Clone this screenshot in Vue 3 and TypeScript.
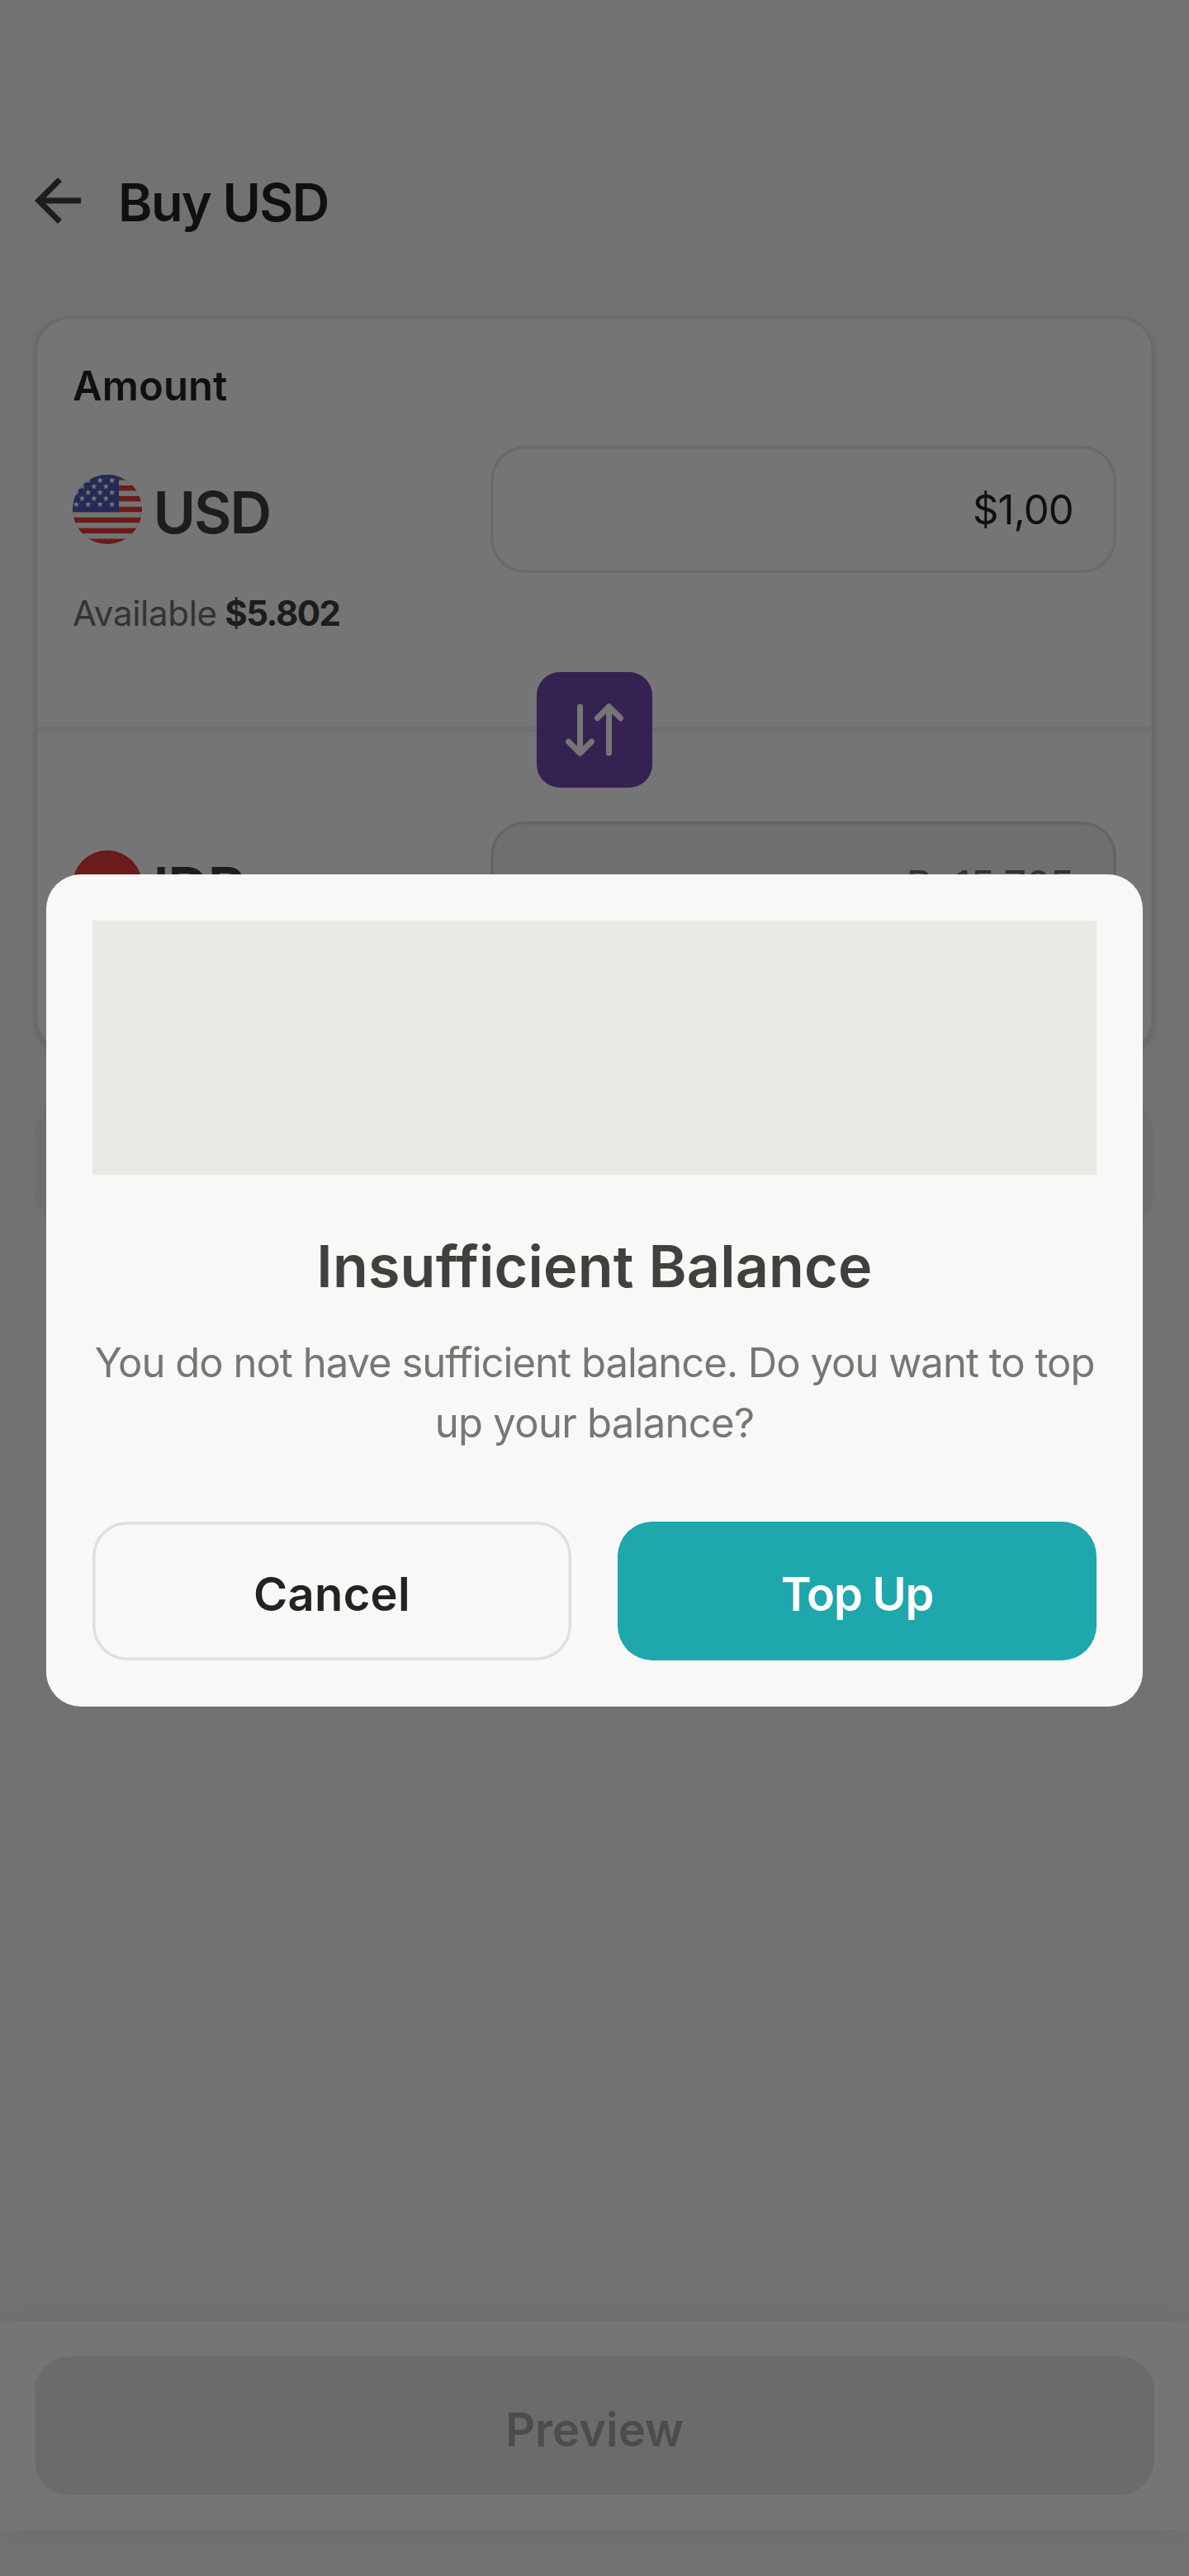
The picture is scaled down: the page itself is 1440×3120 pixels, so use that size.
<script setup lang="ts">
interface Star {
  x: number
  y: number
}

const stripes: number[] = [0, 2, 4, 6, 8, 10, 12]
const stripeHeight = 84 / 13

const stars: Star[] = []
for (let row = 0; row < 5; row++) {
  const start = row % 2 === 0 ? 4.3 : 11.4
  for (let x = start; x < 50; x += 14.45) {
    stars.push({ x, y: 7 + row * 7.25 })
  }
}

function starPoints(star: Star): string {
  const points: string[] = []
  for (let i = 0; i < 10; i++) {
    const radius = i % 2 === 0 ? 4 : 1.7
    const angle = (Math.PI / 5) * i - Math.PI / 2
    points.push(`${(star.x + radius * Math.cos(angle)).toFixed(2)},${(star.y + radius * Math.sin(angle)).toFixed(2)}`)
  }
  return points.join(' ')
}
</script>

<template>
  <div class="screen">
    <header class="header">
      <svg class="back" viewBox="0 0 24 24" aria-label="Back">
        <path d="M20 11H7.83l5.59-5.59L12 4l-8 8 8 8 1.41-1.41L7.83 13H20z" fill="#41403d" />
      </svg>
      <h1 class="title">Buy USD</h1>
    </header>

    <section class="card">
      <div class="half half-top">
        <h2 class="label">Amount</h2>
        <div class="row">
          <div class="currency">
            <svg class="flag" viewBox="0 0 84 84">
              <defs>
                <clipPath id="disc"><circle cx="42" cy="42" r="42" /></clipPath>
              </defs>
              <g clip-path="url(#disc)">
                <rect width="84" height="84" fill="#fdfdfd" />
                <rect v-for="s in stripes" :key="s" x="0" :y="s * stripeHeight" width="84" :height="stripeHeight" fill="#e93c3c" />
                <rect width="56" :height="stripeHeight * 7" fill="#4e5db9" />
                <polygon v-for="(star, i) in stars" :key="'star' + i" :points="starPoints(star)" fill="#fdfdfd" />
                <circle cx="42" cy="42" r="41" fill="none" stroke="#000" stroke-opacity="0.06" stroke-width="2" />
              </g>
            </svg>
            <span class="code">USD</span>
          </div>
          <div class="field">$1,00</div>
        </div>
        <p class="available"><span>Available</span><strong>$5.802</strong></p>
      </div>

      <div class="divider">
        <button class="swap" aria-label="Swap currencies">
          <svg viewBox="0 0 24 24" fill="none" stroke="#fff" stroke-width="2" stroke-linecap="round" stroke-linejoin="round">
            <path d="M7 4v16M3 16.05l4 4 4-4" />
            <path d="M17 20V4M13 7.95l4-4 4 4" />
          </svg>
        </button>
      </div>

      <div class="half half-bottom">
        <div class="row">
          <div class="currency">
            <svg class="flag" viewBox="0 0 84 84">
              <g clip-path="url(#disc)">
                <rect width="84" height="84" fill="#fdfdfd" />
                <rect width="84" height="42" fill="#e93c3c" />
                <circle cx="42" cy="42" r="41" fill="none" stroke="#000" stroke-opacity="0.06" stroke-width="2" />
              </g>
            </svg>
            <span class="code">IDR</span>
          </div>
          <div class="field field-disabled">Rp15.765</div>
        </div>
      </div>
    </section>

    <div class="info"></div>

    <footer class="footer">
      <button class="preview" disabled>Preview</button>
    </footer>

    <div class="overlay">
      <div class="modal" role="dialog">
        <div class="picture"></div>
        <h2 class="modal-title">Insufficient Balance</h2>
        <p class="modal-text">
          You do not have sufficient balance. Do you want to top<br /><span class="last-line">up your balance?</span>
        </p>
        <div class="actions">
          <button class="btn btn-outline">Cancel</button>
          <button class="btn btn-primary">Top Up</button>
        </div>
      </div>
    </div>
  </div>
</template>

<style>
body {
  margin: 0;
}
</style>

<style scoped>
.screen {
  position: relative;
  box-sizing: border-box;
  width: 1440px;
  height: 3120px;
  overflow: hidden;
  display: flex;
  flex-direction: column;
  padding: 201px 0 56px;
  background: #f8f8f5;
  font-family: Inter, 'Noto Sans', sans-serif;
  color: #242320;
}
h1, h2, p {
  margin: 0;
}
button {
  font-family: inherit;
  border: 0;
  padding: 0;
}
.header {
  display: flex;
  align-items: center;
  height: 84px;
  padding-left: 28px;
  gap: 31px;
}
.back {
  width: 84px;
  height: 84px;
}
.title {
  padding-top: 4px;
  font-size: 63px;
  line-height: 80px;
  font-weight: 600;
  letter-spacing: -1.62px;
}
.card {
  box-sizing: border-box;
  height: 893px;
  margin: 98px 42px 0;
  border-radius: 42px;
  background: #fefefe;
  box-shadow:
    inset 0 0 0 3.5px #e6e6e8,
    0 3.5px 3.5px rgba(90, 90, 150, 0.13),
    0 3px 14px rgba(60, 40, 40, 0.05);
}
.half {
  padding: 0 46px;
}
.half-top {
  box-sizing: border-box;
  height: 497px;
  padding-top: 48px;
}
.half-bottom {
  padding-top: 108px;
}
.label {
  font-size: 49px;
  line-height: 74px;
  font-weight: 600;
  letter-spacing: 0.1px;
}
.row {
  display: flex;
  align-items: center;
  justify-content: space-between;
  height: 154px;
}
.half-top .row {
  margin-top: 35px;
}
.currency {
  display: flex;
  align-items: center;
  gap: 13.5px;
}
.flag {
  width: 84px;
  height: 84px;
}
.code {
  padding-top: 7px;
  font-size: 70px;
  line-height: 84px;
  font-weight: 600;
  letter-spacing: -2px;
  color: #41403c;
}
.field {
  box-sizing: border-box;
  display: flex;
  align-items: center;
  justify-content: flex-end;
  width: 758px;
  height: 154px;
  padding-right: 52px;
  border-radius: 42px;
  box-shadow: inset 0 0 0 3.5px #e6e6e6;
  font-size: 49px;
  letter-spacing: -0.8px;
}
.field-disabled {
  background: #f3f1ed;
  box-shadow: inset 0 0 0 3.5px #dcdad6;
  color: #70706e;
}
.available {
  display: flex;
  gap: 9.5px;
  margin-top: 17px;
  font-size: 42px;
  line-height: 63px;
  letter-spacing: -0.3px;
  color: #70706e;
}
.available strong {
  font-weight: 700;
  letter-spacing: -1.5px;
  color: #41403c;
}
.divider {
  display: flex;
  align-items: center;
  justify-content: center;
  height: 7px;
  margin: 0 3.5px;
  background: #f1f1f1;
}
.swap {
  flex: none;
  display: flex;
  align-items: center;
  justify-content: center;
  width: 140px;
  height: 140px;
  border-radius: 28px;
  background: #714ab2;
}
.swap svg {
  width: 84px;
  height: 84px;
}
.info {
  height: 154px;
  margin: 56px 42px 0;
  border-radius: 42px;
  background: #f4f0ec;
}
.footer {
  margin-top: auto;
  padding: 42px;
  background: #fefefe;
  box-shadow: 0 0 35px rgba(30, 30, 15, 0.06);
}
.preview {
  display: block;
  width: 100%;
  height: 168px;
  padding-top: 9px;
  border-radius: 42px;
  background: #ebe9e5;
  color: #a7a7a2;
  font-size: 56px;
  font-weight: 600;
}
.overlay {
  position: absolute;
  inset: 0;
  padding: 1058.5px 56px 0;
  background: rgba(0, 0, 0, 0.54);
}
.modal {
  box-sizing: border-box;
  height: 1008px;
  padding: 56px;
  border-radius: 42px;
  background: #f9f8f6;
  text-align: center;
}
.picture {
  height: 308px;
  background: #eae9e4;
}
.modal-title {
  margin-top: 69px;
  font-size: 70px;
  line-height: 84px;
  font-weight: 600;
  letter-spacing: 0.2px;
  color: #41403d;
}
.modal-text {
  margin-top: 38px;
  font-size: 49px;
  line-height: 73.5px;
  font-weight: 400;
  letter-spacing: -0.98px;
  white-space: nowrap;
  color: #777673;
}
.last-line {
  letter-spacing: -0.7px;
}
.actions {
  display: flex;
  gap: 56px;
  margin-top: 82px;
}
.btn {
  flex: 1;
  height: 168px;
  padding-top: 8px;
  border-radius: 42px;
  font-size: 56px;
  font-weight: 600;
}
.btn-outline {
  background: transparent;
  box-shadow: inset 0 0 0 3.5px #e0dfdd;
  color: #242320;
  letter-spacing: 0.3px;
}
.btn-primary {
  background: #1ea7ad;
  color: #fff;
  letter-spacing: -1.2px;
}
</style>
